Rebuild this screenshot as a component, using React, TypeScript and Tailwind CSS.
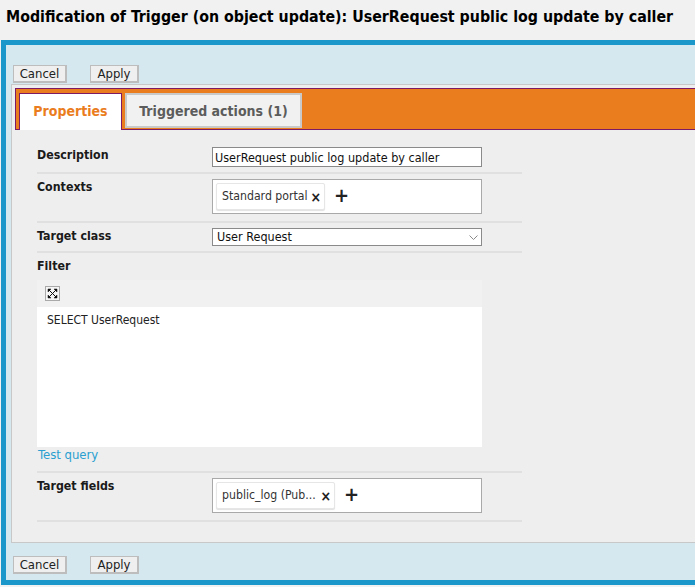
function Chip({ label, width }: { label: string; width: string }) {
  return (
    <div className="flex items-center">
      <div className={`flex h-[27px] items-center justify-between rounded-[2px] border border-[#e6e6e6] bg-white pl-[5px] pr-[3px] text-[12.2px] leading-none text-[#333] shadow-[0_1px_1px_rgba(0,0,0,0.12)] ${width}`}>
        <span className="whitespace-nowrap">{label}</span>
        <span className="text-[14px] font-bold text-[#222]">×</span>
      </div>
      <span className="ml-[9px] -mt-[4px] text-[20px] font-bold leading-none text-[#222]">+</span>
    </div>
  )
}

function Buttons() {
  return (
    <div className="flex gap-[23px] text-[13px] leading-none text-[#222]">
      <button className="h-[18px] w-[54px] border border-[#bdbdbd] border-b-2 border-r-2 bg-[#efefef]">Cancel</button>
      <button className="h-[18px] w-[49px] border border-[#bdbdbd] border-b-2 border-r-2 bg-[#efefef]">Apply</button>
    </div>
  )
}

function Label({ children }: { children: React.ReactNode }) {
  return <div className="w-[175px] shrink-0 pt-px text-[12.3px] font-bold leading-[14px] text-[#1a1a1a]">{children}</div>
}

export default function App() {
  return (
    <div className="h-[587px] w-[695px] overflow-hidden bg-[#f1f1f1] font-['DejaVu_Sans_Condensed','DejaVu_Sans',sans-serif]">
      {/* Title */}
      <h1 className="flex h-[40px] items-center whitespace-nowrap pb-[6px] pl-[6px] text-[15.8px] font-bold text-black">
        Modification of Trigger (on object update): UserRequest public log update by caller
      </h1>

      {/* Blue frame */}
      <div className="ml-px h-[545px] w-[720px] border-y-[5px] border-l-[5px] border-[#1c97c9] bg-[#d5e7ef] pl-[5px] pt-[20px]">
        <div className="pl-[2px]">
          <Buttons />
        </div>

        {/* Panel */}
        <div className="mt-[1px] h-[459px] border border-[#c8c8c8] border-r-0 bg-[#eeeeee] pl-[3px] pt-[3px]">
          <div className="flex h-[42px] items-start gap-[3px] border border-[#7d1a66] bg-[#ea7d1e] pl-[3px] pt-[4px]">
            <div className="flex h-[37px] w-[103px] items-center justify-center border border-b-0 border-[#7d1a66] bg-white pb-[2px] text-[14px] font-bold text-[#ea7d1e]">
              Properties
            </div>
            <div className="flex h-[35px] w-[177px] items-center justify-center border-2 border-[#c9c9c9] bg-[#f1f1f1] pt-[2px] text-[14px] font-bold text-[#5c5c5c]">
              Triggered actions (1)
            </div>
          </div>

          {/* Form */}
          <div className="ml-[22px] w-[485px] pt-[17px]">
            <div className="flex h-[27px] border-b-2 border-[#e0e0e0]">
              <Label>Description</Label>
              <input
                readOnly
                value="UserRequest public log update by caller"
                className="h-[20px] w-[270px] border border-[#8a8a8a] bg-white pl-[2px] text-[12.5px] text-[#111] outline-none"
              />
            </div>
            <div className="flex h-[49px] border-b-2 border-[#e0e0e0] pt-[5px]">
              <Label>Contexts</Label>
              <div className="flex h-[35px] w-[270px] items-center border border-[#a9a9a9] bg-white pl-[3px]">
                <Chip label="Standard portal" width="w-[109px]" />
              </div>
            </div>
            <div className="flex h-[30px] border-b-2 border-[#e0e0e0] pt-[5px]">
              <Label>Target class</Label>
              <div className="flex h-[18px] w-[270px] items-center justify-between border border-[#8a8a8a] bg-white pl-[4px] pr-[3px] text-[12.5px] leading-none text-[#111]">
                <span>User Request</span>
                <svg width="9" height="5" viewBox="0 0 9 5" fill="none" stroke="#8a8a8a">
                  <path d="M0.5 0.5 L4.5 4.5 L8.5 0.5" />
                </svg>
              </div>
            </div>
            <div className="pt-[5px]">
              <Label>Filter</Label>
              <div className="mt-[7px] w-[445px]">
                <div className="flex h-[27px] items-center bg-[#f1f1f1] pl-[8px]">
                  <div className="flex size-[15px] items-center justify-center border border-[#a9a9a9] bg-[#f5f5f5]">
                    <svg width="11" height="11" viewBox="0 0 11 11" fill="#111" stroke="#111">
                      <path d="M1 1 H4 L1 4 Z M10 1 H7 L10 4 Z M1 10 H4 L1 7 Z M10 10 H7 L10 7 Z" strokeWidth="0.5" />
                      <path d="M2 2 L9 9 M9 2 L2 9" strokeWidth="1" />
                    </svg>
                  </div>
                </div>
                <div className="h-[140px] bg-white pl-[10px] pt-[6px] text-[12px] leading-[14px] text-[#222]">
                  SELECT UserRequest
                </div>
              </div>
              <a className="block pl-[1px] text-[13px] leading-[15px] text-[#2a9fd0]">Test query</a>
            </div>
            <div className="mt-[9px] flex h-[51px] border-y-2 border-[#e0e0e0] pt-[5px]">
              <Label>Target fields</Label>
              <div className="flex h-[35px] w-[270px] items-center border border-[#a9a9a9] bg-white pl-[3px]">
                <Chip label="public_log (Pub..." width="w-[119px]" />
              </div>
            </div>
          </div>
        </div>

        <div className="mt-[13px] pl-[2px]">
          <Buttons />
        </div>
      </div>
    </div>
  )
}
